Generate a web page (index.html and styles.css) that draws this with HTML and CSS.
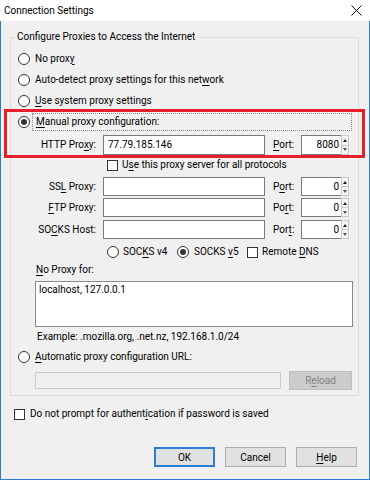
FILE: index.html
```html
<!DOCTYPE html>
<html>
<head>
<meta charset="utf-8">
<link rel="stylesheet" href="styles.css">
</head>
<body>
<div class="window">
  <div class="titlebar">
    <span class="title">Connection Settings</span>
    <svg class="close" width="11" height="11" viewBox="0 0 11 11"><path d="M0.5 0.5 L10.5 10.5 M10.5 0.5 L0.5 10.5" stroke="#111" stroke-width="1" fill="none"/></svg>
  </div>
  <div class="body">
    <div class="group">
      <span class="legend">Configure Proxies to Access the Internet</span>
      <div class="row opt r1"><span class="radio"></span><span class="lbl">No prox<u>y</u></span></div>
      <div class="row opt r2"><span class="radio"></span><span class="lbl">Auto-detect proxy settings for this net<u>w</u>ork</span></div>
      <div class="row opt r3"><span class="radio"></span><span class="lbl"><u>U</u>se system proxy settings</span></div>
      <div class="row opt r4"><span class="radio on"></span><span class="focus"><u>M</u>anual proxy configuration:</span></div>
      <div class="row proxy http">
        <span class="plabel">HTTP Pro<u>x</u>y:</span><span class="field host">77.79.185.146</span>
        <span class="portlbl"><u>P</u>ort:</span><span class="field port">8080</span><span class="spin"><span class="up"></span><span class="down"></span></span>
      </div>
      <div class="row sub allproto"><span class="check"></span><span class="lbl">U<u>s</u>e this proxy server for all protocols</span></div>
      <div class="row proxy ssl">
        <span class="plabel">SS<u>L</u> Proxy:</span><span class="field host"></span>
        <span class="portlbl">P<u>o</u>rt:</span><span class="field port">0</span><span class="spin"><span class="up"></span><span class="down"></span></span>
      </div>
      <div class="row proxy ftp">
        <span class="plabel"><u>F</u>TP Proxy:</span><span class="field host"></span>
        <span class="portlbl">Po<u>r</u>t:</span><span class="field port">0</span><span class="spin"><span class="up"></span><span class="down"></span></span>
      </div>
      <div class="row proxy socks">
        <span class="plabel">SO<u>C</u>KS Host:</span><span class="field host"></span>
        <span class="portlbl">Por<u>t</u>:</span><span class="field port">0</span><span class="spin"><span class="up"></span><span class="down"></span></span>
      </div>
      <div class="row sub socksver">
        <span class="choice c1"><span class="radio"></span><span class="lbl">SOC<u>K</u>S v4</span></span>
        <span class="choice c2"><span class="radio on"></span><span class="lbl">SOCKS <u>v</u>5</span></span>
        <span class="choice c3"><span class="check"></span><span class="lbl">Remote <u>D</u>NS</span></span>
      </div>
      <div class="row noproxy-label"><u>N</u>o Proxy for:</div>
      <div class="textarea">localhost, 127.0.0.1</div>
      <div class="row example">Example: .mozilla.org, .net.nz, 192.168.1.0/24</div>
      <div class="row opt r5"><span class="radio"></span><span class="lbl"><u>A</u>utomatic proxy configuration URL:</span></div>
      <div class="row urlrow"><span class="field url disabled"></span><span class="btn reload">R<u>e</u>load</span></div>
    </div>
    <div class="row prompt"><span class="check"></span><span class="lbl">Do not prompt for authent<u>i</u>cation if password is saved</span></div>
    <div class="buttons">
      <span class="btn default">OK</span>
      <span class="btn">Cancel</span>
      <span class="btn"><u>H</u>elp</span>
    </div>
  </div>
  <div class="highlight"></div>
</div>
</body>
</html>
```
FILE: styles.css
```css
* { box-sizing: border-box; }
html, body { margin: 0; padding: 0; }
body {
  width: 370px;
  height: 480px;
  font-family: Roboto, "Noto Sans", sans-serif;
  font-size: 10px;
  color: #000;
  background: #fff;
}
u { text-decoration-thickness: 1px; text-underline-offset: 2px; }
.window {
  position: relative;
  width: 370px;
  height: 480px;
  display: flex;
  flex-direction: column;
}
.titlebar {
  height: 21px;
  background: #fff;
  display: flex;
  align-items: center;
  justify-content: space-between;
  padding: 0 8px 0 4px;
}
.title { font-size: 10px; line-height: 16px; }
.close { display: block; margin-top: 0; }
.body {
  flex: 1;
  background: #f0f0f0;
  border: 1px solid #2b7cd3;
  border-top: none;
  display: flex;
  flex-direction: column;
}
.group {
  margin: 16px 10px 0 9px;
  border: 1px solid #dcdcdc;
  display: flex;
  flex-direction: column;
  padding-bottom: 5px;
}
.legend {
  align-self: flex-start;
  margin: -9px 0 0 4px;
  padding: 0 2px;
  background: #f0f0f0;
  line-height: 16px;
  height: 16px;
}
.row { display: flex; align-items: center; line-height: 14px; white-space: nowrap; }
.opt { padding-left: 7px; }
.radio {
  width: 12px; height: 12px;
  border: 1px solid #333;
  border-radius: 50%;
  background: #fff;
  flex: none;
  display: flex;
  align-items: center;
  justify-content: center;
}
.radio.on::after {
  content: "";
  width: 6px; height: 6px;
  border-radius: 50%;
  background: #333;
}
.check {
  width: 11px; height: 11px;
  border: 1px solid #333;
  background: #fff;
  flex: none;
}
.opt .lbl { margin-left: 5px; }
.r1 { height: 21px; margin-top: 3px; }
.r2 { height: 21px; }
.r3 { height: 21px; }
.r4 { height: 18px; margin-top: 2px; }
.focus {
  flex: 1;
  margin: 0 6px 0 2px;
  height: 18px;
  border: 1px dotted #888;
  padding-left: 3px;
  display: flex;
  align-items: center;
}
.proxy { height: 19px; margin-top: 2px; }
.proxy.http { height: 20px; margin-top: 4px; }
.proxy.socks { margin-top: 3px; }
.plabel { width: 85px; text-align: right; margin-right: 7px; flex: none; }
.field {
  height: 100%;
  background: #fff;
  border: 1px solid #7a7a7a;
  display: flex;
  align-items: center;
  flex: none;
}
.host { width: 162px; padding-left: 4px; }
.portlbl { width: 28px; margin-left: 8px; flex: none; }
.port { width: 40px; justify-content: flex-end; padding-right: 2px; }
.proxy .port { border-right: none; }
.spin {
  width: 8px; height: 100%;
  display: flex; flex-direction: column;
  border: 1px solid #c8c8c8;
  background: #f5f5f5;
  flex: none;
}
.spin span { flex: 1; display: flex; align-items: center; justify-content: center; }
.spin .up { border-bottom: 1px solid #c8c8c8; }
.spin .up::after {
  content: ""; border-left: 2.5px solid transparent; border-right: 2.5px solid transparent;
  border-bottom: 3px solid #222;
}
.spin .down::after {
  content: ""; border-left: 2.5px solid transparent; border-right: 2.5px solid transparent;
  border-top: 3px solid #555;
}
.sub { padding-left: 96px; }
.allproto { height: 14px; margin-top: 3px; }
.allproto .lbl { margin-left: 4px; }
.ssl { margin-top: 5px; }
.socksver { height: 14px; margin-top: 6px; }
.choice { display: flex; align-items: center; flex: none; }
.choice .lbl { margin-left: 4px; }
.c1, .c2 { width: 70px; }
.c2 .lbl { margin-left: 5px; }
.noproxy-label { height: 14px; margin-top: 4px; padding-left: 25px; }
.textarea {
  margin: 4px 0 0 24px;
  width: 318px;
  height: 46px;
  background: #fff;
  border: 1px solid #8a8a8a;
  padding: 1px 3px;
  line-height: 14px;
}
.example { height: 14px; margin-top: 3px; padding-left: 26px; }
.r5 { height: 16px; margin-top: 5px; }
.urlrow { height: 19px; margin-top: 6px; padding-left: 24px; }
.url { width: 246px; height: 17px; }
.disabled { background: #f0f0f0; border-color: #ccc; }
.btn {
  display: flex;
  align-items: center;
  justify-content: center;
  background: #e1e1e1;
  border: 1px solid #adadad;
  height: 20px;
  width: 61px;
  flex: none;
}
.reload {
  margin-left: 8px;
  width: 63px;
  height: 19px;
  background: #cccccc;
  border-color: #bfbfbf;
  color: #838383;
}
.prompt { height: 14px; margin-top: 11px; padding-left: 13px; }
.prompt .lbl { margin-left: 5px; }
.buttons {
  display: flex;
  justify-content: flex-end;
  gap: 10px;
  margin-top: 26px;
  padding-right: 12px;
}
.btn.default { border: 2px solid #2a7fd4; }
.highlight {
  position: absolute;
  left: 4px;
  top: 109px;
  width: 361px;
  height: 49px;
  border: 3px solid #e6202b;
  pointer-events: none;
}
```
